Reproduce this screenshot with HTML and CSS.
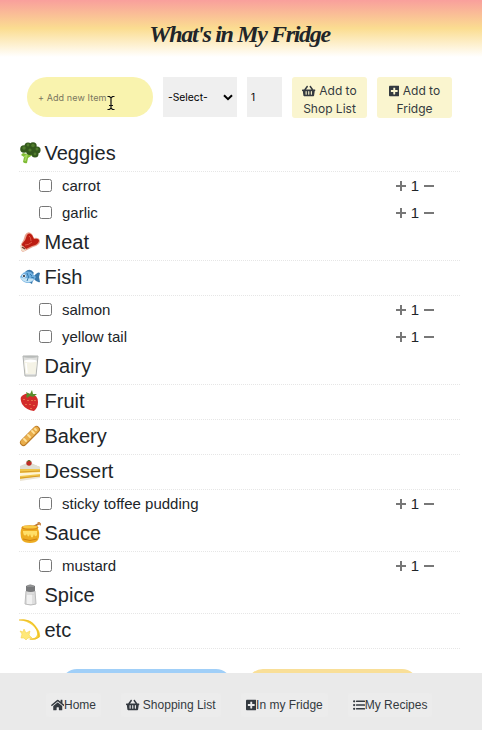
FILE: index.html
```html
<!DOCTYPE html>
<html lang="en">
<head>
    <meta charset="UTF-8">
    <meta name="viewport" content="width=device-width, initial-scale=1.0">
    <title>What's in My Fridge</title>
    <link rel="stylesheet" href="styles.css">
</head>
<body>
    <svg class="sprite">
        <symbol id="basket" viewBox="0 0 576 512"><path d="M576 216v16c0 13.255-10.745 24-24 24h-8l-26.113 182.788C514.509 462.435 494.257 480 470.37 480H105.63c-23.887 0-44.139-17.565-47.518-41.212L32 256h-8c-13.255 0-24-10.745-24-24v-16c0-13.255 10.745-24 24-24h67.341l106.78-146.821c10.395-14.292 30.407-17.453 44.701-7.058 14.293 10.395 17.453 30.408 7.058 44.701L170.477 192h235.046L326.12 82.821c-10.395-14.292-7.234-34.306 7.059-44.701 14.291-10.395 34.306-7.235 44.701 7.058L484.659 192H552c13.255 0 24 10.745 24 24zM312 392V280c0-13.255-10.745-24-24-24s-24 10.745-24 24v112c0 13.255 10.745 24 24 24s24-10.745 24-24zm112 0V280c0-13.255-10.745-24-24-24s-24 10.745-24 24v112c0 13.255 10.745 24 24 24s24-10.745 24-24zm-224 0V280c0-13.255-10.745-24-24-24s-24 10.745-24 24v112c0 13.255 10.745 24 24 24s24-10.745 24-24z"/></symbol>
        <symbol id="plus-square" viewBox="0 0 448 512"><path d="M400 32H48C21.5 32 0 53.5 0 80v352c0 26.5 21.5 48 48 48h352c26.5 0 48-21.5 48-48V80c0-26.5-21.5-48-48-48zm-32 252c0 6.6-5.4 12-12 12h-92v92c0 6.6-5.4 12-12 12h-56c-6.6 0-12-5.4-12-12v-92H92c-6.6 0-12-5.4-12-12v-56c0-6.6 5.4-12 12-12h92v-92c0-6.6 5.4-12 12-12h56c6.6 0 12 5.4 12 12v92h92c6.6 0 12 5.4 12 12v56z"/></symbol>
        <symbol id="home" viewBox="0 0 576 512"><path d="M280.37 148.26L96 300.11V464a16 16 0 0 0 16 16l112.06-.29a16 16 0 0 0 15.92-16V368a16 16 0 0 1 16-16h64a16 16 0 0 1 16 16v95.64a16 16 0 0 0 16 16.05L464 480a16 16 0 0 0 16-16V300L295.67 148.26a12.19 12.19 0 0 0-15.3 0zM571.6 251.47L488 182.56V44.05a12 12 0 0 0-12-12h-56a12 12 0 0 0-12 12v72.61L318.47 43a48 48 0 0 0-61 0L4.34 251.47a12 12 0 0 0-1.6 16.9l25.5 31A12 12 0 0 0 45.15 301l235.22-193.74a12.19 12.19 0 0 1 15.3 0L530.9 301a12 12 0 0 0 16.9-1.6l25.5-31a12 12 0 0 0-1.7-16.93z"/></symbol>
        <symbol id="list" viewBox="0 0 512 512"><circle cx="48" cy="96" r="48"/><circle cx="48" cy="256" r="48"/><circle cx="48" cy="416" r="48"/><rect x="128" y="64" width="384" height="64" rx="16"/><rect x="128" y="224" width="384" height="64" rx="16"/><rect x="128" y="384" width="384" height="64" rx="16"/></symbol>
        <symbol id="plus" viewBox="0 0 10 10"><path d="M5 0v10M0 5h10" stroke="#777" stroke-width="2"/></symbol>
        <symbol id="minus" viewBox="0 0 10 10"><path d="M0 5h10" stroke="#777" stroke-width="2"/></symbol>
    </svg>

    <header class="header">
        <h1 class="title">What's in My Fridge</h1>
    </header>

    <main class="main">
        <form class="add-form">
            <div class="item-field">
                <input class="item-input" type="text" placeholder="+ Add new Item">
                <svg class="caret" viewBox="0 0 8 16"><path d="M.5 1.5h2L4 3l1.500-1.500h2M4 3v10M.5 14.500h2L4 13l1.500 1.500h2M2 10.500h4" fill="none" stroke="#111" stroke-width="1.200"/></svg>
            </div>
            <div class="select-field">
                <select class="category">
                    <option>-Select-</option>
                </select>
                <svg class="arrow" viewBox="0 0 10 7"><path d="M1 1.200l4 4 4-4" fill="none" stroke="#000" stroke-width="2"/></svg>
            </div>
            <input class="amount" type="text" value="1">
            <button class="add-btn" type="button"><svg class="icon wide"><use href="#basket"/></svg> Add to<br>Shop List</button>
            <button class="add-btn" type="button"><svg class="icon"><use href="#plus-square"/></svg> Add to<br>Fridge</button>
        </form>

        <section class="fridge">
            <h2 class="category-name">
                <svg class="emoji" viewBox="0 0 22 22"><path d="M10 9l5 3-6 4-1 5q-2 1-4-1l1-5-3-2 2-2 4 1z" fill="#7fbb35"/><path d="M5 15l4-3M6 19l2-6" stroke="#a6d861" stroke-width="1.500"/><g fill="#34591d"><circle cx="5" cy="7" r="3.800"/><circle cx="9" cy="4" r="3.500"/><circle cx="14" cy="4" r="3.700"/><circle cx="18" cy="8" r="3.600"/><circle cx="16" cy="12" r="3.500"/><circle cx="11" cy="9" r="4"/><circle cx="14" cy="8" r="3"/></g><g fill="#517c2d"><circle cx="5" cy="6" r="1.700"/><circle cx="9" cy="3" r="1.400"/><circle cx="14" cy="3.500" r="1.800"/><circle cx="18" cy="7" r="1.500"/><circle cx="11" cy="8" r="1.600"/><circle cx="16" cy="12" r="1.400"/></g></svg>
                Veggies
            </h2>
            <ul class="items">
                <li class="item"><input class="check" type="checkbox"><span class="name">carrot</span><svg class="step"><use href="#plus"/></svg><span class="qty">1</span><svg class="step"><use href="#minus"/></svg></li>
                <li class="item"><input class="check" type="checkbox"><span class="name">garlic</span><svg class="step"><use href="#plus"/></svg><span class="qty">1</span><svg class="step"><use href="#minus"/></svg></li>
            </ul>

            <h2 class="category-name">
                <svg class="emoji" viewBox="0 0 22 22"><path d="M2 13Q5 9 6 4q3-5 7-1l2 4q5-1 6 3 0 4-7 6l-8 4q-3 2-4-1z" fill="#e9a08c"/><path d="M3 13Q7 9 8 4q2-3 5 0l2 4q5-1 5 2-1 4-7 5l-8 4q-2-1-2-6z" fill="#bd1d12"/><path d="M10 5q2 1 2 5M6 14q4 0 7-3" fill="none" stroke="#df5a46"/><path d="M1 14l3 1 3 3-1 2q-2 1-4-1z" fill="#f1ddc9"/><path d="M3 16l3 2" stroke="#77392a" stroke-width="1.500"/></svg>
                Meat
            </h2>

            <h2 class="category-name">
                <svg class="emoji" viewBox="0 0 22 22"><path d="M6 6q5-5 9 1l-2 2zM8 15l5 3 1-4zM15 10q4-5 6-3l-1 4 1 5q-3 1-6-3z" fill="#3877aa"/><path d="M1 11q4-7 11-5l5 5q-3 6-9 6-5-1-7-6z" fill="#70afe0"/><path d="M1 11q4 2 7 1l7 1q-3 4-8 3-4-1-6-5z" fill="#c4e3f5"/><path d="M8 7q3 4 0 8M11 8l2 2M12 11l3 1" fill="none" stroke="#357cae"/><circle cx="5" cy="10" r="1.800" fill="#fff"/><circle cx="5" cy="10" r="1" fill="#17202a"/></svg>
                Fish
            </h2>
            <ul class="items">
                <li class="item"><input class="check" type="checkbox"><span class="name">salmon</span><svg class="step"><use href="#plus"/></svg><span class="qty">1</span><svg class="step"><use href="#minus"/></svg></li>
                <li class="item"><input class="check" type="checkbox"><span class="name">yellow tail</span><svg class="step"><use href="#plus"/></svg><span class="qty">1</span><svg class="step"><use href="#minus"/></svg></li>
            </ul>

            <h2 class="category-name">
                <svg class="emoji" viewBox="0 0 22 22"><path d="M4 1h15l-2 20H6z" fill="#dedfdd" stroke="#b3b5b3"/><path d="M5 6h13l-1.500 13h-10z" fill="#f5f3e6"/><ellipse cx="11.500" cy="6" rx="6.300" ry="1.500" fill="#fff"/><path d="M7 8l1 10" stroke="#fff" stroke-width="1.500"/><ellipse cx="11.500" cy="1.700" rx="7" ry="1" fill="#b8bbb9"/></svg>
                Dairy
            </h2>

            <h2 class="category-name">
                <svg class="emoji" viewBox="0 0 22 22"><path d="M2 7Q6 2 12 4q7 1 7 8 0 6-4 9Q7 20 3 14 1 9 2 7z" fill="#d32c2b"/><path d="M3 5l5 0-1-3 4 2 2-4 1 4 4 0-4 3-3-1-3 2-1-3z" fill="#588d2c"/><path d="M5 9v1M9 10v1M13 10v1M16 10v1M7 14v1M11 14v1M15 15v1M12 18v1" stroke="#f7b065"/></svg>
                Fruit
            </h2>

            <h2 class="category-name">
                <svg class="emoji" viewBox="0 0 22 22"><path d="M4.500 17.500L17.500 4.500" stroke="#b87824" stroke-width="7" stroke-linecap="round"/><path d="M4.500 17L17 4.500" stroke="#e9ae4c" stroke-width="5.500" stroke-linecap="round"/><path d="M5 14l2 2M9 10l2 2M13 6l2 2M16 4l1 1" stroke="#ffe29b" stroke-width="1.800" stroke-linecap="round"/></svg>
                Bakery
            </h2>

            <h2 class="category-name">
                <svg class="emoji" viewBox="0 0 22 22"><path d="M1 7l9-4 11 4v10L1 20z" fill="#f0c74c"/><path d="M1 6l9-4 11 5v2L1 9z" fill="#dfdfd4"/><path d="M1 13l20-1v2L1 16z" fill="#fff4d4"/><path d="M1 19l20-3v2L1 21z" fill="#ece4d3"/><path d="M1 12l20-1M1 18l20-2" stroke="#d89b27"/><circle cx="10" cy="3" r="2.700" fill="#bd2f25"/><path d="M8 2l2-2 2 2" stroke="#63813c" fill="none"/></svg>
                Dessert
            </h2>
            <ul class="items">
                <li class="item"><input class="check" type="checkbox"><span class="name">sticky toffee pudding</span><svg class="step"><use href="#plus"/></svg><span class="qty">1</span><svg class="step"><use href="#minus"/></svg></li>
            </ul>

            <h2 class="category-name">
                <svg class="emoji" viewBox="0 0 22 22"><path d="M14 5l7-4" stroke="#bc7834" stroke-width="2"/><path d="M19 0l3 3" stroke="#cf8e50" stroke-width="2"/><path d="M3 5h15q4 6 1 13-2 3-8 3t-8-3Q0 11 3 5z" fill="#edac22"/><path d="M4 9h14v4q-2 3-3-1-2 7-4 0-2 5-3 0-3 4-4-2z" fill="#ffdf68"/><ellipse cx="11" cy="5.500" rx="8.500" ry="2.300" fill="#d88a16"/><ellipse cx="11" cy="5" rx="7.500" ry="1.600" fill="#f9c943"/><path d="M4 17q7 3 14 0" fill="none" stroke="#cf8210"/></svg>
                Sauce
            </h2>
            <ul class="items">
                <li class="item"><input class="check" type="checkbox"><span class="name">mustard</span><svg class="step"><use href="#plus"/></svg><span class="qty">1</span><svg class="step"><use href="#minus"/></svg></li>
            </ul>

            <h2 class="category-name">
                <svg class="emoji" viewBox="0 0 22 22"><path d="M7 7h9l1 13q-5 2-11 0z" fill="#dcdcdc" stroke="#bcbcbc"/><path d="M8 11h7v9H8z" fill="#f1f1f1"/><path d="M7 2q4-3 9 0v5q-4 2-9 0z" fill="#77787a"/><path d="M8 2h7" stroke="#aaa"/><path d="M14 10v10" stroke="#ccc"/></svg>
                Spice
            </h2>

            <h2 class="category-name">
                <svg class="emoji" viewBox="0 0 22 22"><path d="M0 1q10-2 16 5 6 7 5 12-5 4-12 2 8 0 9-4Q19 11 13 6 8 2 0 1z" fill="#f8d33f"/><path d="M0 1q10-1 15 5 5 6 5 12-3 3-9 2" fill="none" stroke="#edbd27"/><path d="M5 10l2 4 4-2-1 4 3 3-4 0-2 2-2-2-3 0 1-4-2-3 3 1z" fill="#ffe879" stroke="#f7d34c" stroke-width=".6"/></svg>
                etc
            </h2>
        </section>

        <div class="actions">
            <button class="action blue" type="button"></button>
            <button class="action yellow" type="button"></button>
        </div>
    </main>

    <nav class="nav">
        <a class="nav-link"><svg class="icon wide"><use href="#home"/></svg>Home</a>
        <a class="nav-link"><svg class="icon wide"><use href="#basket"/></svg>&nbsp;Shopping List</a>
        <a class="nav-link"><svg class="icon"><use href="#plus-square"/></svg>In my Fridge</a>
        <a class="nav-link"><svg class="icon list-icon"><use href="#list"/></svg>My Recipes</a>
    </nav>
</body>
</html>
```

FILE: styles.css
```css
* {
    box-sizing: border-box;
}
body {
    margin: 0;
    height: 730px;
    display: flex;
    flex-direction: column;
    overflow: hidden;
    background-color: #fff;
    color: #212529;
    font-family: "Liberation Sans", Arial, sans-serif;
}
.sprite {
    display: none;
}
.header {
    flex: none;
    height: 57px;
    padding: 17px 3px 0 0;
    text-align: center;
    background: linear-gradient(#f99f9c, #fbdd91 50%, #fff);
}
.title {
    margin: 0;
    font-family: "Liberation Serif", cursive;
    font-size: 24px;
    font-style: italic;
    font-weight: bold;
    line-height: 34px;
    letter-spacing: -1.35px;
}
.main {
    flex: 1;
    min-height: 0;
    overflow: hidden;
    padding: 20px 22px 0 19px;
}
.add-form {
    display: flex;
    gap: 10px;
    padding-left: 8px;
    font-family: Inter, sans-serif;
}
.item-field {
    position: relative;
    width: 126px;
    height: 40px;
}
.item-input {
    width: 126px;
    height: 40px;
    padding: 1px 11px 0;
    border: none;
    border-radius: 20px;
    background-color: #f9f3ae;
    font-family: Inter, sans-serif;
    font-size: 9px;
    letter-spacing: 0.1px;
}
.item-input::placeholder {
    color: #7a7660;
}
.caret {
    position: absolute;
    left: 80px;
    top: 18px;
    width: 8px;
    height: 16px;
}
.select-field {
    display: flex;
    align-items: center;
    width: 74px;
    height: 40px;
    padding: 0 4px 0 5px;
    background-color: #efefef;
}
.category {
    flex: 1;
    min-width: 0;
    padding: 0;
    border: none;
    appearance: none;
    background: none;
    color: #000;
    font-family: Inter, sans-serif;
    font-size: 10.3px;
}
.arrow {
    width: 10px;
    height: 7px;
}
.amount {
    width: 35px;
    height: 40px;
    padding: 1px 4px;
    border: none;
    background-color: #efefef;
    font-family: Inter, sans-serif;
    font-size: 10px;
}
.add-btn {
    width: 75px;
    height: 41px;
    padding: 5px 0 0;
    border: none;
    border-radius: 3px;
    background-color: #faf5cf;
    color: #343a40;
    font-family: Inter, sans-serif;
    font-size: 12px;
    line-height: 18px;
    white-space: nowrap;
}
.icon {
    width: 10.5px;
    height: 12px;
    fill: #343a40;
}
.icon.wide {
    width: 13.5px;
}
.icon.list-icon {
    width: 12px;
}
.add-btn .icon {
    height: 12px;
    vertical-align: -2px;
}
.fridge {
    padding-top: 19px;
}
.category-name {
    display: flex;
    align-items: center;
    height: 35px;
    margin: 0;
    padding-bottom: 1px;
    border-bottom: 1px dotted #e6e6e6;
    font-size: 20px;
    font-weight: normal;
}
.emoji {
    width: 22px;
    height: 22px;
    margin: -2px 3.5px 0 0;
}
.items {
    margin: 0;
    padding: 0;
    list-style: none;
}
.item {
    display: flex;
    align-items: center;
    height: 27px;
    padding: 0 26px 0 20px;
    font-size: 15px;
}
.check {
    width: 13px;
    height: 13px;
    margin: 0 10px 0 0;
}
.name {
    flex: 1;
}
.step {
    width: 10px;
    height: 10px;
}
.qty {
    width: 18px;
    text-align: center;
}
.actions {
    display: flex;
    gap: 15px;
    padding: 20px 0 0 42px;
}
.action {
    width: 171px;
    height: 40px;
    border: none;
    border-radius: 16px;
}
.blue {
    background-color: #a0cff8;
}
.yellow {
    background-color: #f9df98;
}
.nav {
    flex: none;
    display: flex;
    align-items: flex-start;
    gap: 20px;
    height: 57px;
    padding: 20px 0 0 45.5px;
    background-color: #eaeaea;
}
.nav-link {
    display: flex;
    align-items: center;
    height: 24px;
    padding: 0 5px;
    border-radius: 3px;
    background-color: #ececec;
    color: #343a40;
    font-size: 12px;
}
```
